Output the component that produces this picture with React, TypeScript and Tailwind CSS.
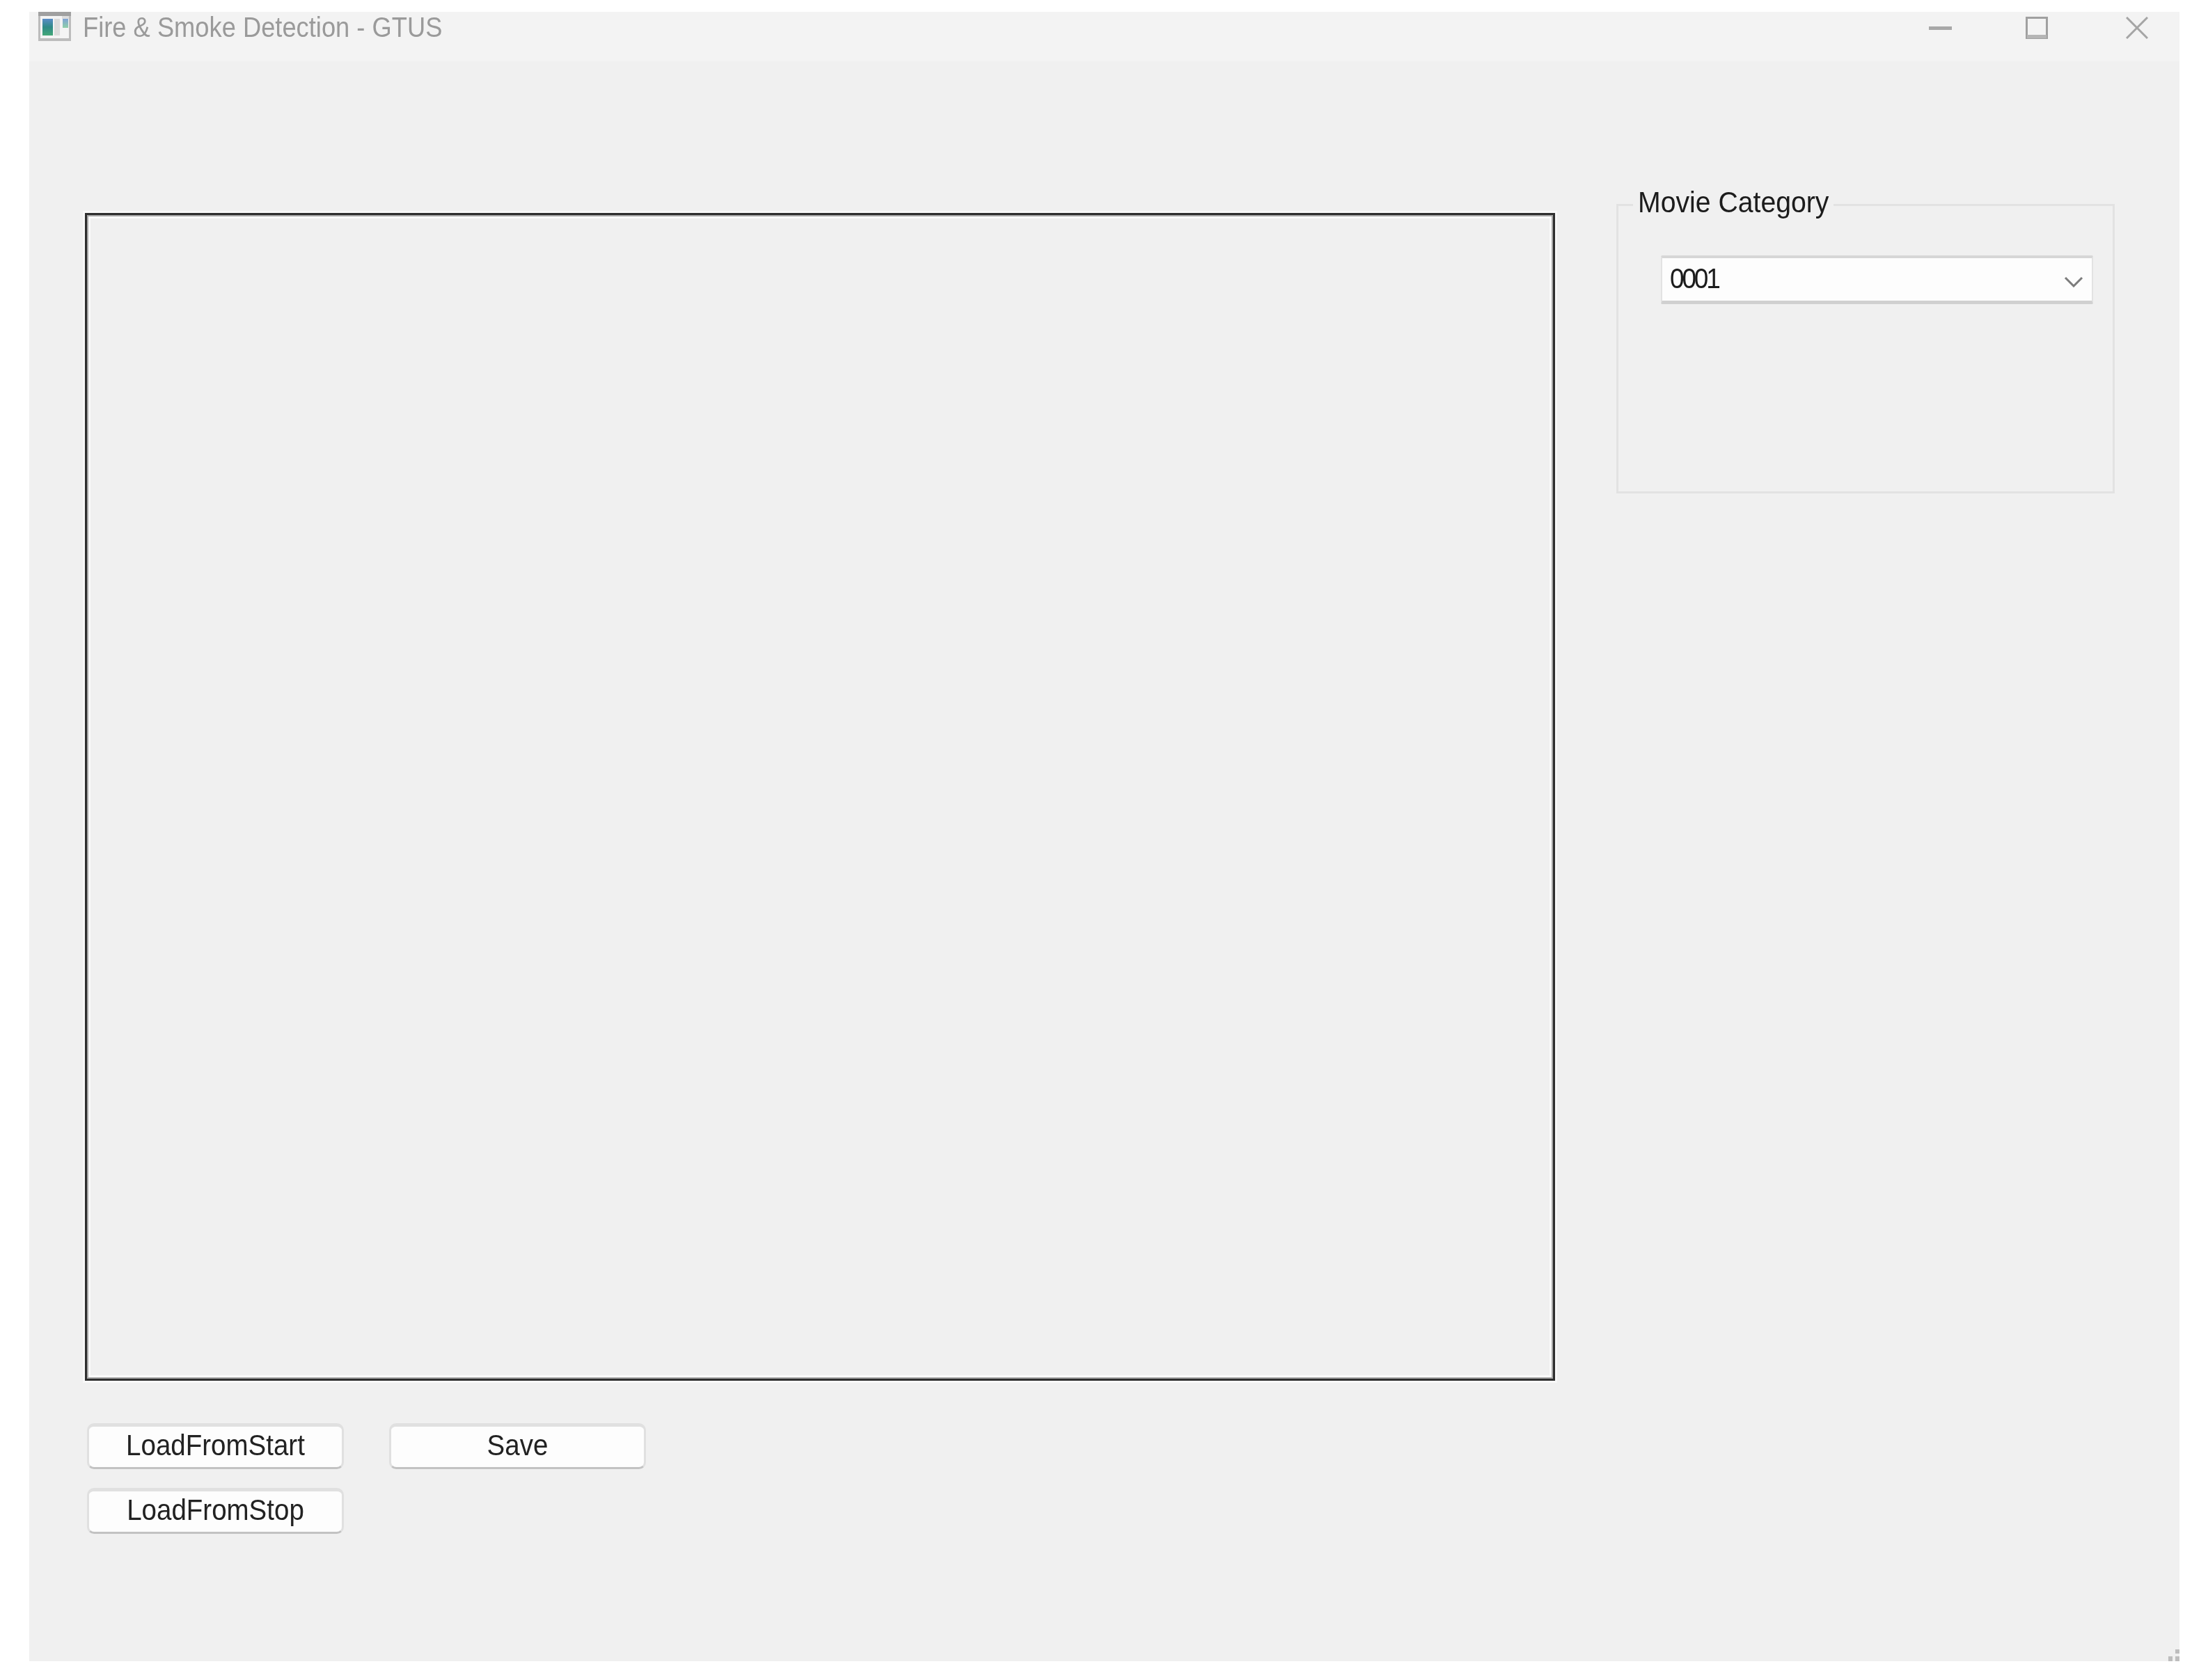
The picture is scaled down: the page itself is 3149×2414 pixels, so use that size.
export default function App() {
  const btn =
    "flex h-[66px] w-[369px] items-center justify-center rounded-[10px] border-x-[3px] border-t-[5px] border-b-[3px] border-x-[#e0e0e0] border-t-[#e0e0e0] border-b-[#c2c2c2] bg-[#fdfdfd] pb-[3px] text-[38.5px] leading-none text-[#222222]";
  const soft = "inline-block scale-y-[1.1] blur-[0.6px]";
  return (
    <div className="h-[2414px] w-[3149px] bg-white pl-[42px] pt-[17px] font-['Liberation_Sans',Arial,sans-serif]">
      <div className="relative flex h-[2370px] w-[3089px] flex-col bg-[#f0f0f0]">
        <div className="flex h-[71px] items-center bg-[#f3f3f3] pl-[13px]">
          <svg width="47" height="42" viewBox="0 0 47 42" className="mb-[29px] shrink-0 blur-[0.7px]">
            <defs>
              <linearGradient id="iconbar" x1="0" y1="0" x2="0" y2="1">
                <stop offset="0" stopColor="#5a8cc8" />
                <stop offset="0.5" stopColor="#2f8a86" />
                <stop offset="1" stopColor="#44a878" />
              </linearGradient>
              <linearGradient id="iconsmall" x1="0" y1="0" x2="0" y2="1">
                <stop offset="0" stopColor="#7fa3d6" />
                <stop offset="1" stopColor="#8fd0a8" />
              </linearGradient>
            </defs>
            <rect width="47" height="42" fill="#bcbcbc" />
            <rect width="47" height="6" fill="#a0a0a0" />
            <rect x="3" y="6" width="41" height="32" fill="#f4f4f4" />
            <rect x="6" y="10" width="15" height="24" fill="url(#iconbar)" />
            <rect x="23" y="10" width="8" height="24" fill="#dcdcdc" />
            <rect x="35" y="10" width="8" height="13" fill="url(#iconsmall)" />
            <rect x="34" y="6" width="10" height="4" fill="#dddddd" />
          </svg>
          <span className={`ml-[17px] mb-[25px] text-[36.3px] leading-none text-[#9a9a9a] ${soft}`}>
            Fire &amp; Smoke Detection - GTUS
          </span>
          <div className="ml-auto flex items-start self-start pr-[45px] pt-[7px]">
            <svg width="33" height="32" viewBox="0 0 33 32" className="mr-[106px] blur-[0.5px]">
              <rect y="14" width="33" height="5" fill="#a8a8a8" />
            </svg>
            <svg width="32" height="32" viewBox="0 0 32 32" className="mr-[112px] blur-[0.5px]">
              <rect x="1.5" y="1.5" width="29" height="29" fill="none" stroke="#a0a0a0" strokeWidth="3" />
              <rect x="2" y="26" width="28" height="5" fill="#b5b5b5" />
            </svg>
            <svg width="32" height="32" viewBox="0 0 32 32" className="blur-[0.5px]">
              <path d="M1 1 L31 31 M31 1 L1 31" stroke="#a5a5a5" strokeWidth="3" fill="none" />
            </svg>
          </div>
        </div>

        <div className="flex pl-[80px] pt-[205px]">
          <div className="flex flex-col">
            <div className="mt-[13px] h-[1678px] w-[2112px] border-[3px] border-[#2e2e2e] shadow-[inset_0_0_0_2px_#a8a8a8,inset_0_0_0_5px_#fafafa,0_0_0_3px_#f8f8f8]" />
            <div className="mt-[61px] flex gap-[65px] pl-[3px]">
              <div className="flex flex-col gap-[27px]">
                <button className={btn}><span className={soft}>LoadFromStart</span></button>
                <button className={btn}><span className={soft}>LoadFromStop</span></button>
              </div>
              <button className={btn}><span className={soft}>Save</span></button>
            </div>
          </div>

          <div className="relative ml-[88px] h-[416px] w-[716px] border-[3px] border-[#e2e2e2] pl-[61px] pt-[71px]">
            <span className="absolute left-[21px] top-[-28px] bg-[#f0f0f0] px-[7px] text-[39.2px] leading-[46px] text-[#1c1c1c]">
              <span className={soft}>Movie Category</span>
            </span>
            <div className="flex h-[70px] w-[621px] items-center justify-between rounded-[2px] border-x-[2px] border-t-[4px] border-b-[5px] border-x-[#e2e2e2] border-t-[#d6d6d6] border-b-[#d0d0d0] bg-[#fdfdfd] pb-[3px] pl-[11px] pr-[12px]">
              <span className={`text-[37px] leading-none tracking-[-3.2px] text-[#1c1c1c] ${soft}`}>0001</span>
              <svg width="28" height="16" viewBox="0 0 28 16" className="mt-[9px] blur-[0.4px]">
                <path d="M2 2 L14 14 L26 2" stroke="#7c7c7c" strokeWidth="3" fill="none" />
              </svg>
            </div>
          </div>
        </div>

        <svg width="17" height="17" viewBox="0 0 17 17" className="absolute bottom-0 right-0">
          <rect x="11" y="0" width="6" height="6" fill="#bdbdbd" />
          <rect x="1" y="10" width="6" height="7" fill="#bdbdbd" />
          <rect x="11" y="10" width="6" height="7" fill="#bdbdbd" />
        </svg>
      </div>
    </div>
  );
}
